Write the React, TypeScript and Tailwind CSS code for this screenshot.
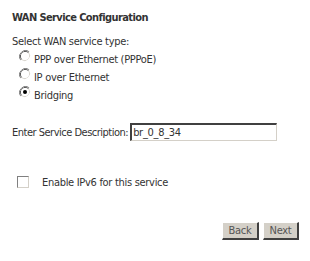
import React from "react";

function Radio({ checked }: { checked?: boolean }) {
  return (
    <svg width="12" height="12" viewBox="0 0 12 12" className="shrink-0 relative -top-[3px]">
      <path d="M10.2 1.8 A6 6 0 0 0 1.8 10.2" stroke="#808080" strokeWidth="1" fill="none" />
      <path d="M9.5 2.5 A5 5 0 0 0 2.5 9.5" stroke="#404040" strokeWidth="1" fill="none" />
      <path d="M1.8 10.2 A6 6 0 0 0 10.2 1.8" stroke="#ffffff" strokeWidth="1" fill="none" />
      <path d="M2.5 9.5 A5 5 0 0 0 9.5 2.5" stroke="#d4d0c8" strokeWidth="1" fill="none" />
      <circle cx="6" cy="6" r="4" fill="#ffffff" />
      {checked && <circle cx="6" cy="6" r="2" fill="#000000" />}
    </svg>
  );
}

const btn =
  "h-[18px] bg-[#d4d0c8] text-[#555] border-t border-l border-t-white border-l-white border-b-2 border-r-2 border-b-[#404040] border-r-[#404040] flex items-center justify-center";

export default function App() {
  return (
    <div
      className="w-[310px] h-[261px] bg-white text-[#333] text-[11px] leading-none tracking-[-0.3px] whitespace-nowrap"
      style={{ fontFamily: "'DejaVu Sans Condensed', 'DejaVu Sans', sans-serif" }}
    >
      <div className="pl-[12px] pt-[11px] flex flex-col">
        <div className="font-bold h-[12px] flex items-center tracking-[-0.6px]">WAN Service Configuration</div>
        <div className="mt-[12px] h-[12px] flex items-center">Select WAN service type:</div>
        <div className="flex flex-col pl-[7px] mt-[3px]">
          <div className="flex items-center gap-[3px] h-[18px]">
            <Radio />
            <span>PPP over Ethernet (PPPoE)</span>
          </div>
          <div className="flex items-center gap-[3px] h-[18px]">
            <Radio />
            <span>IP over Ethernet</span>
          </div>
          <div className="flex items-center gap-[3px] h-[18px]">
            <Radio checked />
            <span>Bridging</span>
          </div>
        </div>
        <div className="flex items-center mt-[19px] h-[18px]">
          <span className="tracking-[-0.5px]">Enter Service Description:</span>
          <div className="ml-[2px] w-[147px] h-[18px] border-t-2 border-l-2 border-t-[#404040] border-l-[#404040] border-b border-r border-b-[#d4d0c8] border-r-[#d4d0c8] flex items-center pl-[1px]">
            br_0_8_34
          </div>
        </div>
        <div className="flex items-center mt-[35px] h-[12px] pl-[5px]">
          <div className="w-[12px] h-[12px] border-t border-l border-t-[#808080] border-l-[#808080] border-b border-r border-b-[#d4d0c8] border-r-[#d4d0c8] bg-white" />
          <span className="ml-[13px]">Enable IPv6 for this service</span>
        </div>
        <div className="flex justify-end gap-[4px] mt-[34px] pr-[11px]">
          <button className={btn + " w-[37px]"}>Back</button>
          <button className={btn + " w-[36px]"}>Next</button>
        </div>
      </div>
    </div>
  );
}
